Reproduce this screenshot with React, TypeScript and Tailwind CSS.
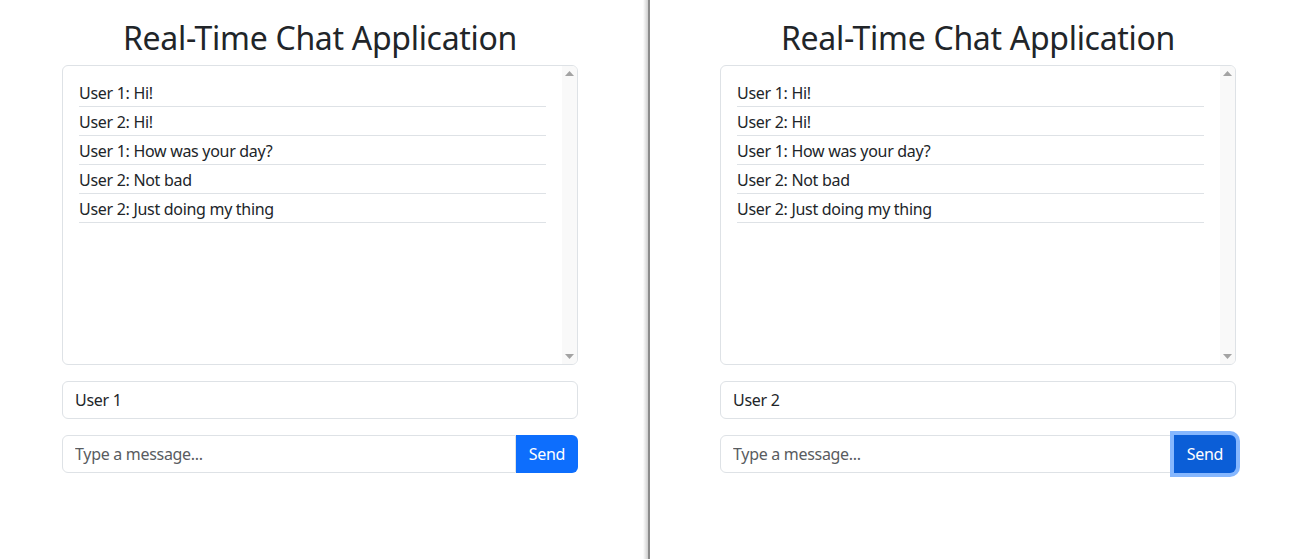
import React from "react";

const messages = [
  { user: "User 1", text: "Hi!" },
  { user: "User 2", text: "Hi!" },
  { user: "User 1", text: "How was your day?" },
  { user: "User 2", text: "Not bad" },
  { user: "User 2", text: "Just doing my thing" },
];

function Scrollbar() {
  return (
    <div className="w-[15px] bg-[#f9f9f9] flex flex-col justify-between items-center py-[5px]">
      <svg width="9" height="5" viewBox="0 0 9 5">
        <path d="M0 5 L4.5 0 L9 5 Z" fill="#a3a3a3" />
      </svg>
      <svg width="9" height="5" viewBox="0 0 9 5">
        <path d="M0 0 L9 0 L4.5 5 Z" fill="#a3a3a3" />
      </svg>
    </div>
  );
}

function ChatPanel({ user, focused }: { user: string; focused?: boolean }) {
  return (
    <div className="w-[516px]">
      <h1 className="pt-[19px] mb-2 text-center text-[32px] leading-[1.2] font-normal tracking-[-0.3px] text-[#212529]">
        Real-Time Chat Application
      </h1>

      {/* message list */}
      <div className="h-[300px] flex overflow-hidden border border-[#dee2e6] rounded-[6px]">
        <div className="flex-1 pt-3 px-4">
          {messages.map((m, i) => (
            <div key={i} className="pt-[3px] pb-[1px] leading-6 border-b border-[#dee2e6]">
              {m.user}: {m.text}
            </div>
          ))}
        </div>
        <Scrollbar />
      </div>

      <input
        readOnly
        value={user}
        className="mt-4 w-full h-[38px] px-3 border border-[#dee2e6] rounded-[6px] text-[#212529] tracking-[-0.3px] outline-none"
      />

      <div className="mt-4 flex">
        <input
          placeholder="Type a message..."
          className="flex-1 h-[38px] px-3 border border-[#dee2e6] rounded-l-[6px] tracking-[-0.3px] outline-none placeholder:text-[#595c5f]"
        />
        <button
          className={
            focused
              ? "relative z-10 w-[62px] h-[38px] rounded-r-[6px] bg-[#0b5ed7] text-white tracking-[-0.3px] ring-4 ring-[#86b7fe]"
              : "w-[62px] h-[38px] rounded-r-[6px] bg-[#0d6efd] text-white tracking-[-0.3px]"
          }
        >
          Send
        </button>
      </div>
    </div>
  );
}

export default function App() {
  return (
    <div
      className="flex h-[559px] w-[1292px] bg-white text-[16px] tracking-[-0.3px] text-[#212529]"
      style={{ fontFamily: '"Noto Sans", sans-serif' }}
    >
      <div className="w-[643px] pl-[62px]">
        <ChatPanel user="User 1" />
      </div>
      <div className="w-[5px] bg-gradient-to-r from-white to-[#cfcfcf]" />
      <div className="w-[2px] bg-[#8c8c8c]" />
      <div className="flex-1 pl-[70px]">
        <ChatPanel user="User 2" focused />
      </div>
    </div>
  );
}
